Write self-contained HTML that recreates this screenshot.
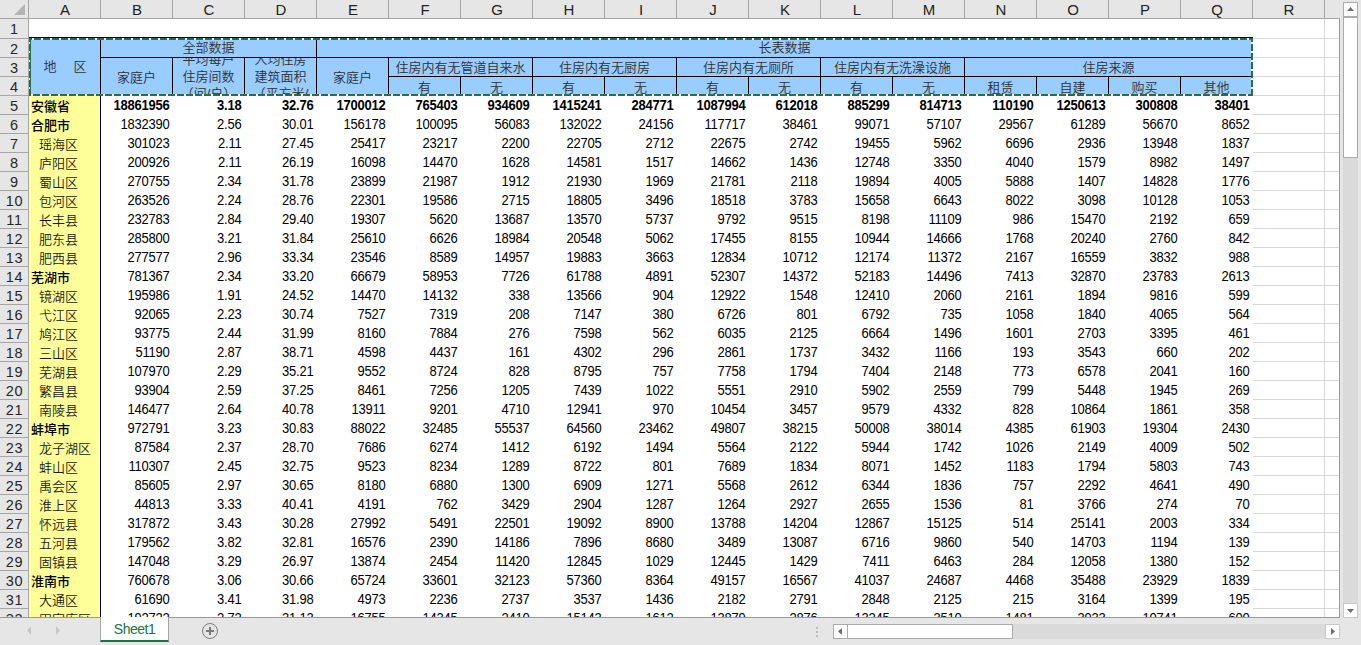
<!DOCTYPE html><html lang="zh-CN"><head><meta charset="utf-8"><title>Sheet1</title><style>
html,body{margin:0;padding:0}
body{width:1361px;height:645px;overflow:hidden;background:#e6e6e6;position:relative;font-family:"Liberation Sans","Noto Sans CJK SC",sans-serif}
#app{position:absolute;left:0;top:0;width:1361px;height:645px;overflow:hidden;background:#e6e6e6}
#app div{position:absolute;box-sizing:border-box}
.ch{top:0;height:18px;width:72px;text-align:center;font-size:14px;line-height:20px;color:#222;transform:scaleX(1.07)}
.rh{left:0;width:29px;height:18px;text-align:center;font-size:14.5px;line-height:21px;color:#262626;letter-spacing:0.8px;overflow:hidden}
.vl{width:1px;background:#a6a6a6}
.hl{height:1px;background:#a6a6a6}
.gv{width:1px;background:#d6d6d6}
.gh{height:1px;background:#d6d6d6}
.bv{width:1px;background:#000}
.bh{height:1px;background:#000}
.n{width:71px;height:18px;text-align:right;padding-right:2.5px;font-size:13px;line-height:18px;color:#000;letter-spacing:-0.22px;white-space:nowrap;transform:scaleY(1.075);transform-origin:0 4px}
.b{font-weight:bold}
.a{left:29px;width:71px;height:18px;font-family:"Liberation Sans","Noto Sans CJK SC",sans-serif;font-weight:350;font-size:13px;line-height:22px;color:#1a1a1a;white-space:nowrap;overflow:hidden}
.ab{font-family:"Liberation Sans","Noto Sans CJK SC",sans-serif;font-weight:500;color:#000;padding-left:2px}
.ai{padding-left:10px}
.h{font-family:"Liberation Sans","Noto Sans CJK SC",sans-serif;font-weight:350;font-size:13px;color:#303030;text-align:center;white-space:nowrap;overflow:hidden;line-height:18px}
</style></head><body><div id="app">
<div style="left:29px;top:19px;width:1310px;height:598px;background:#fff"></div>
<div class="gh" style="left:1253px;top:38px;width:86px"></div>
<div class="gh" style="left:1253px;top:57px;width:86px"></div>
<div class="gh" style="left:1253px;top:76px;width:86px"></div>
<div class="gh" style="left:1253px;top:95px;width:86px"></div>
<div class="gh" style="left:1253px;top:114px;width:86px"></div>
<div class="gh" style="left:1253px;top:133px;width:86px"></div>
<div class="gh" style="left:1253px;top:152px;width:86px"></div>
<div class="gh" style="left:1253px;top:171px;width:86px"></div>
<div class="gh" style="left:1253px;top:190px;width:86px"></div>
<div class="gh" style="left:1253px;top:209px;width:86px"></div>
<div class="gh" style="left:1253px;top:228px;width:86px"></div>
<div class="gh" style="left:1253px;top:247px;width:86px"></div>
<div class="gh" style="left:1253px;top:266px;width:86px"></div>
<div class="gh" style="left:1253px;top:285px;width:86px"></div>
<div class="gh" style="left:1253px;top:304px;width:86px"></div>
<div class="gh" style="left:1253px;top:323px;width:86px"></div>
<div class="gh" style="left:1253px;top:342px;width:86px"></div>
<div class="gh" style="left:1253px;top:361px;width:86px"></div>
<div class="gh" style="left:1253px;top:380px;width:86px"></div>
<div class="gh" style="left:1253px;top:399px;width:86px"></div>
<div class="gh" style="left:1253px;top:418px;width:86px"></div>
<div class="gh" style="left:1253px;top:437px;width:86px"></div>
<div class="gh" style="left:1253px;top:456px;width:86px"></div>
<div class="gh" style="left:1253px;top:475px;width:86px"></div>
<div class="gh" style="left:1253px;top:494px;width:86px"></div>
<div class="gh" style="left:1253px;top:513px;width:86px"></div>
<div class="gh" style="left:1253px;top:532px;width:86px"></div>
<div class="gh" style="left:1253px;top:551px;width:86px"></div>
<div class="gh" style="left:1253px;top:570px;width:86px"></div>
<div class="gh" style="left:1253px;top:589px;width:86px"></div>
<div class="gh" style="left:1253px;top:608px;width:86px"></div>
<div class="gv" style="left:1324px;top:19px;height:598px"></div>
<div style="left:29px;top:96px;width:71px;height:521px;background:#ffff99"></div>
<div style="left:29px;top:38px;width:1224px;height:58px;background:#99ccff"></div>
<div class="bh" style="left:29px;top:37px;width:1224px"></div>
<div class="bv" style="left:100px;top:38px;height:579px"></div>
<div class="bh" style="left:101px;top:57px;width:1151px"></div>
<div class="bh" style="left:389px;top:76px;width:863px"></div>
<div class="bv" style="left:316px;top:38px;height:58px"></div>
<div class="bv" style="left:172px;top:58px;height:38px"></div>
<div class="bv" style="left:244px;top:58px;height:38px"></div>
<div class="bv" style="left:388px;top:58px;height:38px"></div>
<div class="bv" style="left:532px;top:58px;height:38px"></div>
<div class="bv" style="left:676px;top:58px;height:38px"></div>
<div class="bv" style="left:820px;top:58px;height:38px"></div>
<div class="bv" style="left:964px;top:58px;height:38px"></div>
<div class="bv" style="left:460px;top:77px;height:19px"></div>
<div class="bv" style="left:604px;top:77px;height:19px"></div>
<div class="bv" style="left:748px;top:77px;height:19px"></div>
<div class="bv" style="left:892px;top:77px;height:19px"></div>
<div class="bv" style="left:1036px;top:77px;height:19px"></div>
<div class="bv" style="left:1108px;top:77px;height:19px"></div>
<div class="bv" style="left:1180px;top:77px;height:19px"></div>
<div class="h" style="left:29px;top:39px;width:71px;height:55px;line-height:55px;padding-left:1px">地<span style="display:inline-block;width:17px"></span>区</div>
<div class="h" style="left:101px;top:39px;width:215px;height:18px;line-height:18px;">全部数据</div>
<div class="h" style="left:317px;top:39px;width:935px;height:18px;line-height:18px;">长表数据</div>
<div class="h" style="left:101px;top:58px;width:71px;height:36px;line-height:40px;">家庭户</div>
<div class="h" style="left:317px;top:58px;width:71px;height:36px;line-height:40px;">家庭户</div>
<div class="h" style="left:173px;top:58px;width:71px;height:36px"><div style="left:0;top:-7px;width:71px;height:17px;line-height:17px">平均每户</div><div style="left:0;top:10px;width:71px;height:17px;line-height:17px">住房间数</div><div style="left:0;top:27px;width:71px;height:17px;line-height:17px">（间/户）</div></div>
<div class="h" style="left:245px;top:58px;width:71px;height:36px"><div style="left:0;top:-7px;width:71px;height:17px;line-height:17px">人均住房</div><div style="left:0;top:10px;width:71px;height:17px;line-height:17px">建筑面积</div><div style="left:0;top:27px;width:71px;height:17px;line-height:17px">（平方米/</div><div style="left:0;top:44px;width:71px;height:17px;line-height:17px">人）</div></div>
<div class="h" style="left:389px;top:58px;width:143px;height:18px;line-height:20px;">住房内有无管道自来水</div>
<div class="h" style="left:533px;top:58px;width:143px;height:18px;line-height:20px;">住房内有无厨房</div>
<div class="h" style="left:677px;top:58px;width:143px;height:18px;line-height:20px;">住房内有无厕所</div>
<div class="h" style="left:821px;top:58px;width:143px;height:18px;line-height:20px;">住房内有无洗澡设施</div>
<div class="h" style="left:965px;top:58px;width:287px;height:18px;line-height:20px;">住房来源</div>
<div class="h" style="left:389px;top:77px;width:71px;height:17px;line-height:21px;">有</div>
<div class="h" style="left:461px;top:77px;width:71px;height:17px;line-height:21px;">无</div>
<div class="h" style="left:533px;top:77px;width:71px;height:17px;line-height:21px;">有</div>
<div class="h" style="left:605px;top:77px;width:71px;height:17px;line-height:21px;">无</div>
<div class="h" style="left:677px;top:77px;width:71px;height:17px;line-height:21px;">有</div>
<div class="h" style="left:749px;top:77px;width:71px;height:17px;line-height:21px;">无</div>
<div class="h" style="left:821px;top:77px;width:71px;height:17px;line-height:21px;">有</div>
<div class="h" style="left:893px;top:77px;width:71px;height:17px;line-height:21px;">无</div>
<div class="h" style="left:965px;top:77px;width:71px;height:17px;line-height:21px;">租赁</div>
<div class="h" style="left:1037px;top:77px;width:71px;height:17px;line-height:21px;">自建</div>
<div class="h" style="left:1109px;top:77px;width:71px;height:17px;line-height:21px;">购买</div>
<div class="h" style="left:1181px;top:77px;width:71px;height:17px;line-height:21px;">其他</div>
<div class="a ab" style="top:96px">安徽省</div>
<div class="n b" style="left:101px;top:96px">18861956</div>
<div class="n b" style="left:173px;top:96px">3.18</div>
<div class="n b" style="left:245px;top:96px">32.76</div>
<div class="n b" style="left:317px;top:96px">1700012</div>
<div class="n b" style="left:389px;top:96px">765403</div>
<div class="n b" style="left:461px;top:96px">934609</div>
<div class="n b" style="left:533px;top:96px">1415241</div>
<div class="n b" style="left:605px;top:96px">284771</div>
<div class="n b" style="left:677px;top:96px">1087994</div>
<div class="n b" style="left:749px;top:96px">612018</div>
<div class="n b" style="left:821px;top:96px">885299</div>
<div class="n b" style="left:893px;top:96px">814713</div>
<div class="n b" style="left:965px;top:96px">110190</div>
<div class="n b" style="left:1037px;top:96px">1250613</div>
<div class="n b" style="left:1109px;top:96px">300808</div>
<div class="n b" style="left:1181px;top:96px">38401</div>
<div class="a ab" style="top:115px">合肥市</div>
<div class="n" style="left:101px;top:115px">1832390</div>
<div class="n" style="left:173px;top:115px">2.56</div>
<div class="n" style="left:245px;top:115px">30.01</div>
<div class="n" style="left:317px;top:115px">156178</div>
<div class="n" style="left:389px;top:115px">100095</div>
<div class="n" style="left:461px;top:115px">56083</div>
<div class="n" style="left:533px;top:115px">132022</div>
<div class="n" style="left:605px;top:115px">24156</div>
<div class="n" style="left:677px;top:115px">117717</div>
<div class="n" style="left:749px;top:115px">38461</div>
<div class="n" style="left:821px;top:115px">99071</div>
<div class="n" style="left:893px;top:115px">57107</div>
<div class="n" style="left:965px;top:115px">29567</div>
<div class="n" style="left:1037px;top:115px">61289</div>
<div class="n" style="left:1109px;top:115px">56670</div>
<div class="n" style="left:1181px;top:115px">8652</div>
<div class="a ai" style="top:134px">瑶海区</div>
<div class="n" style="left:101px;top:134px">301023</div>
<div class="n" style="left:173px;top:134px">2.11</div>
<div class="n" style="left:245px;top:134px">27.45</div>
<div class="n" style="left:317px;top:134px">25417</div>
<div class="n" style="left:389px;top:134px">23217</div>
<div class="n" style="left:461px;top:134px">2200</div>
<div class="n" style="left:533px;top:134px">22705</div>
<div class="n" style="left:605px;top:134px">2712</div>
<div class="n" style="left:677px;top:134px">22675</div>
<div class="n" style="left:749px;top:134px">2742</div>
<div class="n" style="left:821px;top:134px">19455</div>
<div class="n" style="left:893px;top:134px">5962</div>
<div class="n" style="left:965px;top:134px">6696</div>
<div class="n" style="left:1037px;top:134px">2936</div>
<div class="n" style="left:1109px;top:134px">13948</div>
<div class="n" style="left:1181px;top:134px">1837</div>
<div class="a ai" style="top:153px">庐阳区</div>
<div class="n" style="left:101px;top:153px">200926</div>
<div class="n" style="left:173px;top:153px">2.11</div>
<div class="n" style="left:245px;top:153px">26.19</div>
<div class="n" style="left:317px;top:153px">16098</div>
<div class="n" style="left:389px;top:153px">14470</div>
<div class="n" style="left:461px;top:153px">1628</div>
<div class="n" style="left:533px;top:153px">14581</div>
<div class="n" style="left:605px;top:153px">1517</div>
<div class="n" style="left:677px;top:153px">14662</div>
<div class="n" style="left:749px;top:153px">1436</div>
<div class="n" style="left:821px;top:153px">12748</div>
<div class="n" style="left:893px;top:153px">3350</div>
<div class="n" style="left:965px;top:153px">4040</div>
<div class="n" style="left:1037px;top:153px">1579</div>
<div class="n" style="left:1109px;top:153px">8982</div>
<div class="n" style="left:1181px;top:153px">1497</div>
<div class="a ai" style="top:172px">蜀山区</div>
<div class="n" style="left:101px;top:172px">270755</div>
<div class="n" style="left:173px;top:172px">2.34</div>
<div class="n" style="left:245px;top:172px">31.78</div>
<div class="n" style="left:317px;top:172px">23899</div>
<div class="n" style="left:389px;top:172px">21987</div>
<div class="n" style="left:461px;top:172px">1912</div>
<div class="n" style="left:533px;top:172px">21930</div>
<div class="n" style="left:605px;top:172px">1969</div>
<div class="n" style="left:677px;top:172px">21781</div>
<div class="n" style="left:749px;top:172px">2118</div>
<div class="n" style="left:821px;top:172px">19894</div>
<div class="n" style="left:893px;top:172px">4005</div>
<div class="n" style="left:965px;top:172px">5888</div>
<div class="n" style="left:1037px;top:172px">1407</div>
<div class="n" style="left:1109px;top:172px">14828</div>
<div class="n" style="left:1181px;top:172px">1776</div>
<div class="a ai" style="top:191px">包河区</div>
<div class="n" style="left:101px;top:191px">263526</div>
<div class="n" style="left:173px;top:191px">2.24</div>
<div class="n" style="left:245px;top:191px">28.76</div>
<div class="n" style="left:317px;top:191px">22301</div>
<div class="n" style="left:389px;top:191px">19586</div>
<div class="n" style="left:461px;top:191px">2715</div>
<div class="n" style="left:533px;top:191px">18805</div>
<div class="n" style="left:605px;top:191px">3496</div>
<div class="n" style="left:677px;top:191px">18518</div>
<div class="n" style="left:749px;top:191px">3783</div>
<div class="n" style="left:821px;top:191px">15658</div>
<div class="n" style="left:893px;top:191px">6643</div>
<div class="n" style="left:965px;top:191px">8022</div>
<div class="n" style="left:1037px;top:191px">3098</div>
<div class="n" style="left:1109px;top:191px">10128</div>
<div class="n" style="left:1181px;top:191px">1053</div>
<div class="a ai" style="top:210px">长丰县</div>
<div class="n" style="left:101px;top:210px">232783</div>
<div class="n" style="left:173px;top:210px">2.84</div>
<div class="n" style="left:245px;top:210px">29.40</div>
<div class="n" style="left:317px;top:210px">19307</div>
<div class="n" style="left:389px;top:210px">5620</div>
<div class="n" style="left:461px;top:210px">13687</div>
<div class="n" style="left:533px;top:210px">13570</div>
<div class="n" style="left:605px;top:210px">5737</div>
<div class="n" style="left:677px;top:210px">9792</div>
<div class="n" style="left:749px;top:210px">9515</div>
<div class="n" style="left:821px;top:210px">8198</div>
<div class="n" style="left:893px;top:210px">11109</div>
<div class="n" style="left:965px;top:210px">986</div>
<div class="n" style="left:1037px;top:210px">15470</div>
<div class="n" style="left:1109px;top:210px">2192</div>
<div class="n" style="left:1181px;top:210px">659</div>
<div class="a ai" style="top:229px">肥东县</div>
<div class="n" style="left:101px;top:229px">285800</div>
<div class="n" style="left:173px;top:229px">3.21</div>
<div class="n" style="left:245px;top:229px">31.84</div>
<div class="n" style="left:317px;top:229px">25610</div>
<div class="n" style="left:389px;top:229px">6626</div>
<div class="n" style="left:461px;top:229px">18984</div>
<div class="n" style="left:533px;top:229px">20548</div>
<div class="n" style="left:605px;top:229px">5062</div>
<div class="n" style="left:677px;top:229px">17455</div>
<div class="n" style="left:749px;top:229px">8155</div>
<div class="n" style="left:821px;top:229px">10944</div>
<div class="n" style="left:893px;top:229px">14666</div>
<div class="n" style="left:965px;top:229px">1768</div>
<div class="n" style="left:1037px;top:229px">20240</div>
<div class="n" style="left:1109px;top:229px">2760</div>
<div class="n" style="left:1181px;top:229px">842</div>
<div class="a ai" style="top:248px">肥西县</div>
<div class="n" style="left:101px;top:248px">277577</div>
<div class="n" style="left:173px;top:248px">2.96</div>
<div class="n" style="left:245px;top:248px">33.34</div>
<div class="n" style="left:317px;top:248px">23546</div>
<div class="n" style="left:389px;top:248px">8589</div>
<div class="n" style="left:461px;top:248px">14957</div>
<div class="n" style="left:533px;top:248px">19883</div>
<div class="n" style="left:605px;top:248px">3663</div>
<div class="n" style="left:677px;top:248px">12834</div>
<div class="n" style="left:749px;top:248px">10712</div>
<div class="n" style="left:821px;top:248px">12174</div>
<div class="n" style="left:893px;top:248px">11372</div>
<div class="n" style="left:965px;top:248px">2167</div>
<div class="n" style="left:1037px;top:248px">16559</div>
<div class="n" style="left:1109px;top:248px">3832</div>
<div class="n" style="left:1181px;top:248px">988</div>
<div class="a ab" style="top:267px">芜湖市</div>
<div class="n" style="left:101px;top:267px">781367</div>
<div class="n" style="left:173px;top:267px">2.34</div>
<div class="n" style="left:245px;top:267px">33.20</div>
<div class="n" style="left:317px;top:267px">66679</div>
<div class="n" style="left:389px;top:267px">58953</div>
<div class="n" style="left:461px;top:267px">7726</div>
<div class="n" style="left:533px;top:267px">61788</div>
<div class="n" style="left:605px;top:267px">4891</div>
<div class="n" style="left:677px;top:267px">52307</div>
<div class="n" style="left:749px;top:267px">14372</div>
<div class="n" style="left:821px;top:267px">52183</div>
<div class="n" style="left:893px;top:267px">14496</div>
<div class="n" style="left:965px;top:267px">7413</div>
<div class="n" style="left:1037px;top:267px">32870</div>
<div class="n" style="left:1109px;top:267px">23783</div>
<div class="n" style="left:1181px;top:267px">2613</div>
<div class="a ai" style="top:286px">镜湖区</div>
<div class="n" style="left:101px;top:286px">195986</div>
<div class="n" style="left:173px;top:286px">1.91</div>
<div class="n" style="left:245px;top:286px">24.52</div>
<div class="n" style="left:317px;top:286px">14470</div>
<div class="n" style="left:389px;top:286px">14132</div>
<div class="n" style="left:461px;top:286px">338</div>
<div class="n" style="left:533px;top:286px">13566</div>
<div class="n" style="left:605px;top:286px">904</div>
<div class="n" style="left:677px;top:286px">12922</div>
<div class="n" style="left:749px;top:286px">1548</div>
<div class="n" style="left:821px;top:286px">12410</div>
<div class="n" style="left:893px;top:286px">2060</div>
<div class="n" style="left:965px;top:286px">2161</div>
<div class="n" style="left:1037px;top:286px">1894</div>
<div class="n" style="left:1109px;top:286px">9816</div>
<div class="n" style="left:1181px;top:286px">599</div>
<div class="a ai" style="top:305px">弋江区</div>
<div class="n" style="left:101px;top:305px">92065</div>
<div class="n" style="left:173px;top:305px">2.23</div>
<div class="n" style="left:245px;top:305px">30.74</div>
<div class="n" style="left:317px;top:305px">7527</div>
<div class="n" style="left:389px;top:305px">7319</div>
<div class="n" style="left:461px;top:305px">208</div>
<div class="n" style="left:533px;top:305px">7147</div>
<div class="n" style="left:605px;top:305px">380</div>
<div class="n" style="left:677px;top:305px">6726</div>
<div class="n" style="left:749px;top:305px">801</div>
<div class="n" style="left:821px;top:305px">6792</div>
<div class="n" style="left:893px;top:305px">735</div>
<div class="n" style="left:965px;top:305px">1058</div>
<div class="n" style="left:1037px;top:305px">1840</div>
<div class="n" style="left:1109px;top:305px">4065</div>
<div class="n" style="left:1181px;top:305px">564</div>
<div class="a ai" style="top:324px">鸠江区</div>
<div class="n" style="left:101px;top:324px">93775</div>
<div class="n" style="left:173px;top:324px">2.44</div>
<div class="n" style="left:245px;top:324px">31.99</div>
<div class="n" style="left:317px;top:324px">8160</div>
<div class="n" style="left:389px;top:324px">7884</div>
<div class="n" style="left:461px;top:324px">276</div>
<div class="n" style="left:533px;top:324px">7598</div>
<div class="n" style="left:605px;top:324px">562</div>
<div class="n" style="left:677px;top:324px">6035</div>
<div class="n" style="left:749px;top:324px">2125</div>
<div class="n" style="left:821px;top:324px">6664</div>
<div class="n" style="left:893px;top:324px">1496</div>
<div class="n" style="left:965px;top:324px">1601</div>
<div class="n" style="left:1037px;top:324px">2703</div>
<div class="n" style="left:1109px;top:324px">3395</div>
<div class="n" style="left:1181px;top:324px">461</div>
<div class="a ai" style="top:343px">三山区</div>
<div class="n" style="left:101px;top:343px">51190</div>
<div class="n" style="left:173px;top:343px">2.87</div>
<div class="n" style="left:245px;top:343px">38.71</div>
<div class="n" style="left:317px;top:343px">4598</div>
<div class="n" style="left:389px;top:343px">4437</div>
<div class="n" style="left:461px;top:343px">161</div>
<div class="n" style="left:533px;top:343px">4302</div>
<div class="n" style="left:605px;top:343px">296</div>
<div class="n" style="left:677px;top:343px">2861</div>
<div class="n" style="left:749px;top:343px">1737</div>
<div class="n" style="left:821px;top:343px">3432</div>
<div class="n" style="left:893px;top:343px">1166</div>
<div class="n" style="left:965px;top:343px">193</div>
<div class="n" style="left:1037px;top:343px">3543</div>
<div class="n" style="left:1109px;top:343px">660</div>
<div class="n" style="left:1181px;top:343px">202</div>
<div class="a ai" style="top:362px">芜湖县</div>
<div class="n" style="left:101px;top:362px">107970</div>
<div class="n" style="left:173px;top:362px">2.29</div>
<div class="n" style="left:245px;top:362px">35.21</div>
<div class="n" style="left:317px;top:362px">9552</div>
<div class="n" style="left:389px;top:362px">8724</div>
<div class="n" style="left:461px;top:362px">828</div>
<div class="n" style="left:533px;top:362px">8795</div>
<div class="n" style="left:605px;top:362px">757</div>
<div class="n" style="left:677px;top:362px">7758</div>
<div class="n" style="left:749px;top:362px">1794</div>
<div class="n" style="left:821px;top:362px">7404</div>
<div class="n" style="left:893px;top:362px">2148</div>
<div class="n" style="left:965px;top:362px">773</div>
<div class="n" style="left:1037px;top:362px">6578</div>
<div class="n" style="left:1109px;top:362px">2041</div>
<div class="n" style="left:1181px;top:362px">160</div>
<div class="a ai" style="top:381px">繁昌县</div>
<div class="n" style="left:101px;top:381px">93904</div>
<div class="n" style="left:173px;top:381px">2.59</div>
<div class="n" style="left:245px;top:381px">37.25</div>
<div class="n" style="left:317px;top:381px">8461</div>
<div class="n" style="left:389px;top:381px">7256</div>
<div class="n" style="left:461px;top:381px">1205</div>
<div class="n" style="left:533px;top:381px">7439</div>
<div class="n" style="left:605px;top:381px">1022</div>
<div class="n" style="left:677px;top:381px">5551</div>
<div class="n" style="left:749px;top:381px">2910</div>
<div class="n" style="left:821px;top:381px">5902</div>
<div class="n" style="left:893px;top:381px">2559</div>
<div class="n" style="left:965px;top:381px">799</div>
<div class="n" style="left:1037px;top:381px">5448</div>
<div class="n" style="left:1109px;top:381px">1945</div>
<div class="n" style="left:1181px;top:381px">269</div>
<div class="a ai" style="top:400px">南陵县</div>
<div class="n" style="left:101px;top:400px">146477</div>
<div class="n" style="left:173px;top:400px">2.64</div>
<div class="n" style="left:245px;top:400px">40.78</div>
<div class="n" style="left:317px;top:400px">13911</div>
<div class="n" style="left:389px;top:400px">9201</div>
<div class="n" style="left:461px;top:400px">4710</div>
<div class="n" style="left:533px;top:400px">12941</div>
<div class="n" style="left:605px;top:400px">970</div>
<div class="n" style="left:677px;top:400px">10454</div>
<div class="n" style="left:749px;top:400px">3457</div>
<div class="n" style="left:821px;top:400px">9579</div>
<div class="n" style="left:893px;top:400px">4332</div>
<div class="n" style="left:965px;top:400px">828</div>
<div class="n" style="left:1037px;top:400px">10864</div>
<div class="n" style="left:1109px;top:400px">1861</div>
<div class="n" style="left:1181px;top:400px">358</div>
<div class="a ab" style="top:419px">蚌埠市</div>
<div class="n" style="left:101px;top:419px">972791</div>
<div class="n" style="left:173px;top:419px">3.23</div>
<div class="n" style="left:245px;top:419px">30.83</div>
<div class="n" style="left:317px;top:419px">88022</div>
<div class="n" style="left:389px;top:419px">32485</div>
<div class="n" style="left:461px;top:419px">55537</div>
<div class="n" style="left:533px;top:419px">64560</div>
<div class="n" style="left:605px;top:419px">23462</div>
<div class="n" style="left:677px;top:419px">49807</div>
<div class="n" style="left:749px;top:419px">38215</div>
<div class="n" style="left:821px;top:419px">50008</div>
<div class="n" style="left:893px;top:419px">38014</div>
<div class="n" style="left:965px;top:419px">4385</div>
<div class="n" style="left:1037px;top:419px">61903</div>
<div class="n" style="left:1109px;top:419px">19304</div>
<div class="n" style="left:1181px;top:419px">2430</div>
<div class="a ai" style="top:438px">龙子湖区</div>
<div class="n" style="left:101px;top:438px">87584</div>
<div class="n" style="left:173px;top:438px">2.37</div>
<div class="n" style="left:245px;top:438px">28.70</div>
<div class="n" style="left:317px;top:438px">7686</div>
<div class="n" style="left:389px;top:438px">6274</div>
<div class="n" style="left:461px;top:438px">1412</div>
<div class="n" style="left:533px;top:438px">6192</div>
<div class="n" style="left:605px;top:438px">1494</div>
<div class="n" style="left:677px;top:438px">5564</div>
<div class="n" style="left:749px;top:438px">2122</div>
<div class="n" style="left:821px;top:438px">5944</div>
<div class="n" style="left:893px;top:438px">1742</div>
<div class="n" style="left:965px;top:438px">1026</div>
<div class="n" style="left:1037px;top:438px">2149</div>
<div class="n" style="left:1109px;top:438px">4009</div>
<div class="n" style="left:1181px;top:438px">502</div>
<div class="a ai" style="top:457px">蚌山区</div>
<div class="n" style="left:101px;top:457px">110307</div>
<div class="n" style="left:173px;top:457px">2.45</div>
<div class="n" style="left:245px;top:457px">32.75</div>
<div class="n" style="left:317px;top:457px">9523</div>
<div class="n" style="left:389px;top:457px">8234</div>
<div class="n" style="left:461px;top:457px">1289</div>
<div class="n" style="left:533px;top:457px">8722</div>
<div class="n" style="left:605px;top:457px">801</div>
<div class="n" style="left:677px;top:457px">7689</div>
<div class="n" style="left:749px;top:457px">1834</div>
<div class="n" style="left:821px;top:457px">8071</div>
<div class="n" style="left:893px;top:457px">1452</div>
<div class="n" style="left:965px;top:457px">1183</div>
<div class="n" style="left:1037px;top:457px">1794</div>
<div class="n" style="left:1109px;top:457px">5803</div>
<div class="n" style="left:1181px;top:457px">743</div>
<div class="a ai" style="top:476px">禹会区</div>
<div class="n" style="left:101px;top:476px">85605</div>
<div class="n" style="left:173px;top:476px">2.97</div>
<div class="n" style="left:245px;top:476px">30.65</div>
<div class="n" style="left:317px;top:476px">8180</div>
<div class="n" style="left:389px;top:476px">6880</div>
<div class="n" style="left:461px;top:476px">1300</div>
<div class="n" style="left:533px;top:476px">6909</div>
<div class="n" style="left:605px;top:476px">1271</div>
<div class="n" style="left:677px;top:476px">5568</div>
<div class="n" style="left:749px;top:476px">2612</div>
<div class="n" style="left:821px;top:476px">6344</div>
<div class="n" style="left:893px;top:476px">1836</div>
<div class="n" style="left:965px;top:476px">757</div>
<div class="n" style="left:1037px;top:476px">2292</div>
<div class="n" style="left:1109px;top:476px">4641</div>
<div class="n" style="left:1181px;top:476px">490</div>
<div class="a ai" style="top:495px">淮上区</div>
<div class="n" style="left:101px;top:495px">44813</div>
<div class="n" style="left:173px;top:495px">3.33</div>
<div class="n" style="left:245px;top:495px">40.41</div>
<div class="n" style="left:317px;top:495px">4191</div>
<div class="n" style="left:389px;top:495px">762</div>
<div class="n" style="left:461px;top:495px">3429</div>
<div class="n" style="left:533px;top:495px">2904</div>
<div class="n" style="left:605px;top:495px">1287</div>
<div class="n" style="left:677px;top:495px">1264</div>
<div class="n" style="left:749px;top:495px">2927</div>
<div class="n" style="left:821px;top:495px">2655</div>
<div class="n" style="left:893px;top:495px">1536</div>
<div class="n" style="left:965px;top:495px">81</div>
<div class="n" style="left:1037px;top:495px">3766</div>
<div class="n" style="left:1109px;top:495px">274</div>
<div class="n" style="left:1181px;top:495px">70</div>
<div class="a ai" style="top:514px">怀远县</div>
<div class="n" style="left:101px;top:514px">317872</div>
<div class="n" style="left:173px;top:514px">3.43</div>
<div class="n" style="left:245px;top:514px">30.28</div>
<div class="n" style="left:317px;top:514px">27992</div>
<div class="n" style="left:389px;top:514px">5491</div>
<div class="n" style="left:461px;top:514px">22501</div>
<div class="n" style="left:533px;top:514px">19092</div>
<div class="n" style="left:605px;top:514px">8900</div>
<div class="n" style="left:677px;top:514px">13788</div>
<div class="n" style="left:749px;top:514px">14204</div>
<div class="n" style="left:821px;top:514px">12867</div>
<div class="n" style="left:893px;top:514px">15125</div>
<div class="n" style="left:965px;top:514px">514</div>
<div class="n" style="left:1037px;top:514px">25141</div>
<div class="n" style="left:1109px;top:514px">2003</div>
<div class="n" style="left:1181px;top:514px">334</div>
<div class="a ai" style="top:533px">五河县</div>
<div class="n" style="left:101px;top:533px">179562</div>
<div class="n" style="left:173px;top:533px">3.82</div>
<div class="n" style="left:245px;top:533px">32.81</div>
<div class="n" style="left:317px;top:533px">16576</div>
<div class="n" style="left:389px;top:533px">2390</div>
<div class="n" style="left:461px;top:533px">14186</div>
<div class="n" style="left:533px;top:533px">7896</div>
<div class="n" style="left:605px;top:533px">8680</div>
<div class="n" style="left:677px;top:533px">3489</div>
<div class="n" style="left:749px;top:533px">13087</div>
<div class="n" style="left:821px;top:533px">6716</div>
<div class="n" style="left:893px;top:533px">9860</div>
<div class="n" style="left:965px;top:533px">540</div>
<div class="n" style="left:1037px;top:533px">14703</div>
<div class="n" style="left:1109px;top:533px">1194</div>
<div class="n" style="left:1181px;top:533px">139</div>
<div class="a ai" style="top:552px">固镇县</div>
<div class="n" style="left:101px;top:552px">147048</div>
<div class="n" style="left:173px;top:552px">3.29</div>
<div class="n" style="left:245px;top:552px">26.97</div>
<div class="n" style="left:317px;top:552px">13874</div>
<div class="n" style="left:389px;top:552px">2454</div>
<div class="n" style="left:461px;top:552px">11420</div>
<div class="n" style="left:533px;top:552px">12845</div>
<div class="n" style="left:605px;top:552px">1029</div>
<div class="n" style="left:677px;top:552px">12445</div>
<div class="n" style="left:749px;top:552px">1429</div>
<div class="n" style="left:821px;top:552px">7411</div>
<div class="n" style="left:893px;top:552px">6463</div>
<div class="n" style="left:965px;top:552px">284</div>
<div class="n" style="left:1037px;top:552px">12058</div>
<div class="n" style="left:1109px;top:552px">1380</div>
<div class="n" style="left:1181px;top:552px">152</div>
<div class="a ab" style="top:571px">淮南市</div>
<div class="n" style="left:101px;top:571px">760678</div>
<div class="n" style="left:173px;top:571px">3.06</div>
<div class="n" style="left:245px;top:571px">30.66</div>
<div class="n" style="left:317px;top:571px">65724</div>
<div class="n" style="left:389px;top:571px">33601</div>
<div class="n" style="left:461px;top:571px">32123</div>
<div class="n" style="left:533px;top:571px">57360</div>
<div class="n" style="left:605px;top:571px">8364</div>
<div class="n" style="left:677px;top:571px">49157</div>
<div class="n" style="left:749px;top:571px">16567</div>
<div class="n" style="left:821px;top:571px">41037</div>
<div class="n" style="left:893px;top:571px">24687</div>
<div class="n" style="left:965px;top:571px">4468</div>
<div class="n" style="left:1037px;top:571px">35488</div>
<div class="n" style="left:1109px;top:571px">23929</div>
<div class="n" style="left:1181px;top:571px">1839</div>
<div class="a ai" style="top:590px">大通区</div>
<div class="n" style="left:101px;top:590px">61690</div>
<div class="n" style="left:173px;top:590px">3.41</div>
<div class="n" style="left:245px;top:590px">31.98</div>
<div class="n" style="left:317px;top:590px">4973</div>
<div class="n" style="left:389px;top:590px">2236</div>
<div class="n" style="left:461px;top:590px">2737</div>
<div class="n" style="left:533px;top:590px">3537</div>
<div class="n" style="left:605px;top:590px">1436</div>
<div class="n" style="left:677px;top:590px">2182</div>
<div class="n" style="left:749px;top:590px">2791</div>
<div class="n" style="left:821px;top:590px">2848</div>
<div class="n" style="left:893px;top:590px">2125</div>
<div class="n" style="left:965px;top:590px">215</div>
<div class="n" style="left:1037px;top:590px">3164</div>
<div class="n" style="left:1109px;top:590px">1399</div>
<div class="n" style="left:1181px;top:590px">195</div>
<div class="a ai" style="top:609px">田家庵区</div>
<div class="n" style="left:101px;top:609px">192722</div>
<div class="n" style="left:173px;top:609px">2.72</div>
<div class="n" style="left:245px;top:609px">31.13</div>
<div class="n" style="left:317px;top:609px">16755</div>
<div class="n" style="left:389px;top:609px">14345</div>
<div class="n" style="left:461px;top:609px">2410</div>
<div class="n" style="left:533px;top:609px">15143</div>
<div class="n" style="left:605px;top:609px">1612</div>
<div class="n" style="left:677px;top:609px">13879</div>
<div class="n" style="left:749px;top:609px">2876</div>
<div class="n" style="left:821px;top:609px">13245</div>
<div class="n" style="left:893px;top:609px">3510</div>
<div class="n" style="left:965px;top:609px">1481</div>
<div class="n" style="left:1037px;top:609px">3933</div>
<div class="n" style="left:1109px;top:609px">10741</div>
<div class="n" style="left:1181px;top:609px">600</div>
<div style="left:29px;top:38px;width:1224px;height:2px;background:repeating-linear-gradient(90deg,#217346 0,#217346 3px,#fff 3px,#fff 5px,#217346 5px,#217346 9px)"></div>
<div style="left:29px;top:94px;width:1224px;height:2px;background:repeating-linear-gradient(90deg,#217346 0,#217346 2px,#fff 2px,#fff 4px,#217346 4px,#217346 9px)"></div>
<div style="left:29px;top:38px;width:1px;height:58px;background:repeating-linear-gradient(180deg,#217346 0,#217346 4px,#fff 4px,#fff 6px,#217346 6px,#217346 9px)"></div>
<div style="left:30px;top:38px;width:1px;height:58px;background:#217346"></div>
<div style="left:1251px;top:38px;width:2px;height:58px;background:repeating-linear-gradient(180deg,#217346 0,#217346 4px,#fff 4px,#fff 6px,#217346 6px,#217346 9px)"></div>
<div style="left:0;top:0;width:1361px;height:18px;background:#e6e6e6"></div>
<div class="ch" style="left:29px">A</div>
<div class="ch" style="left:101px">B</div>
<div class="ch" style="left:173px">C</div>
<div class="ch" style="left:245px">D</div>
<div class="ch" style="left:317px">E</div>
<div class="ch" style="left:389px">F</div>
<div class="ch" style="left:461px">G</div>
<div class="ch" style="left:533px">H</div>
<div class="ch" style="left:605px">I</div>
<div class="ch" style="left:677px">J</div>
<div class="ch" style="left:749px">K</div>
<div class="ch" style="left:821px">L</div>
<div class="ch" style="left:893px">M</div>
<div class="ch" style="left:965px">N</div>
<div class="ch" style="left:1037px">O</div>
<div class="ch" style="left:1109px">P</div>
<div class="ch" style="left:1181px">Q</div>
<div class="ch" style="left:1253px">R</div>
<div class="vl" style="left:28px;top:0;height:18px"></div>
<div class="vl" style="left:100px;top:0;height:18px"></div>
<div class="vl" style="left:172px;top:0;height:18px"></div>
<div class="vl" style="left:244px;top:0;height:18px"></div>
<div class="vl" style="left:316px;top:0;height:18px"></div>
<div class="vl" style="left:388px;top:0;height:18px"></div>
<div class="vl" style="left:460px;top:0;height:18px"></div>
<div class="vl" style="left:532px;top:0;height:18px"></div>
<div class="vl" style="left:604px;top:0;height:18px"></div>
<div class="vl" style="left:676px;top:0;height:18px"></div>
<div class="vl" style="left:748px;top:0;height:18px"></div>
<div class="vl" style="left:820px;top:0;height:18px"></div>
<div class="vl" style="left:892px;top:0;height:18px"></div>
<div class="vl" style="left:964px;top:0;height:18px"></div>
<div class="vl" style="left:1036px;top:0;height:18px"></div>
<div class="vl" style="left:1108px;top:0;height:18px"></div>
<div class="vl" style="left:1180px;top:0;height:18px"></div>
<div class="vl" style="left:1252px;top:0;height:18px"></div>
<div class="vl" style="left:1324px;top:0;height:18px"></div>
<div class="hl" style="left:0;top:18px;width:1340px"></div>
<div style="left:14px;top:4px;width:11px;height:11px;background:#b4b4b4;clip-path:polygon(100% 0,100% 100%,0 100%)"></div>
<div style="left:0;top:19px;width:28px;height:598px;background:#e6e6e6"></div>
<div class="rh" style="top:19px">1</div>
<div class="hl" style="left:0;top:38px;width:28px"></div>
<div class="rh" style="top:39px">2</div>
<div class="hl" style="left:0;top:57px;width:28px"></div>
<div class="rh" style="top:58px">3</div>
<div class="hl" style="left:0;top:76px;width:28px"></div>
<div class="rh" style="top:77px">4</div>
<div class="hl" style="left:0;top:95px;width:28px"></div>
<div class="rh" style="top:96px">5</div>
<div class="hl" style="left:0;top:114px;width:28px"></div>
<div class="rh" style="top:115px">6</div>
<div class="hl" style="left:0;top:133px;width:28px"></div>
<div class="rh" style="top:134px">7</div>
<div class="hl" style="left:0;top:152px;width:28px"></div>
<div class="rh" style="top:153px">8</div>
<div class="hl" style="left:0;top:171px;width:28px"></div>
<div class="rh" style="top:172px">9</div>
<div class="hl" style="left:0;top:190px;width:28px"></div>
<div class="rh" style="top:191px">10</div>
<div class="hl" style="left:0;top:209px;width:28px"></div>
<div class="rh" style="top:210px">11</div>
<div class="hl" style="left:0;top:228px;width:28px"></div>
<div class="rh" style="top:229px">12</div>
<div class="hl" style="left:0;top:247px;width:28px"></div>
<div class="rh" style="top:248px">13</div>
<div class="hl" style="left:0;top:266px;width:28px"></div>
<div class="rh" style="top:267px">14</div>
<div class="hl" style="left:0;top:285px;width:28px"></div>
<div class="rh" style="top:286px">15</div>
<div class="hl" style="left:0;top:304px;width:28px"></div>
<div class="rh" style="top:305px">16</div>
<div class="hl" style="left:0;top:323px;width:28px"></div>
<div class="rh" style="top:324px">17</div>
<div class="hl" style="left:0;top:342px;width:28px"></div>
<div class="rh" style="top:343px">18</div>
<div class="hl" style="left:0;top:361px;width:28px"></div>
<div class="rh" style="top:362px">19</div>
<div class="hl" style="left:0;top:380px;width:28px"></div>
<div class="rh" style="top:381px">20</div>
<div class="hl" style="left:0;top:399px;width:28px"></div>
<div class="rh" style="top:400px">21</div>
<div class="hl" style="left:0;top:418px;width:28px"></div>
<div class="rh" style="top:419px">22</div>
<div class="hl" style="left:0;top:437px;width:28px"></div>
<div class="rh" style="top:438px">23</div>
<div class="hl" style="left:0;top:456px;width:28px"></div>
<div class="rh" style="top:457px">24</div>
<div class="hl" style="left:0;top:475px;width:28px"></div>
<div class="rh" style="top:476px">25</div>
<div class="hl" style="left:0;top:494px;width:28px"></div>
<div class="rh" style="top:495px">26</div>
<div class="hl" style="left:0;top:513px;width:28px"></div>
<div class="rh" style="top:514px">27</div>
<div class="hl" style="left:0;top:532px;width:28px"></div>
<div class="rh" style="top:533px">28</div>
<div class="hl" style="left:0;top:551px;width:28px"></div>
<div class="rh" style="top:552px">29</div>
<div class="hl" style="left:0;top:570px;width:28px"></div>
<div class="rh" style="top:571px">30</div>
<div class="hl" style="left:0;top:589px;width:28px"></div>
<div class="rh" style="top:590px">31</div>
<div class="hl" style="left:0;top:608px;width:28px"></div>
<div class="rh" style="top:609px">32</div>
<div class="vl" style="left:28px;top:0;height:617px"></div>
<div class="vl" style="left:1339px;top:18px;height:600px;background:#9a9a9a"></div>
<div style="left:0;top:617px;width:1361px;height:28px;background:#e6e6e6"></div>
<div class="hl" style="left:0;top:617px;width:1340px;background:#9a9a9a"></div>
<div style="left:1340px;top:0;width:21px;height:645px;background:#e6e6e6"></div>
<div style="left:1343px;top:17px;width:15px;height:587px;background:#dadada"></div>
<div style="left:1343px;top:2px;width:15px;height:15px;background:#fff;border:1px solid #ababab"></div>
<div style="left:1347px;top:7px;width:7px;height:4px;background:#6e6e6e;clip-path:polygon(50% 0,100% 100%,0 100%)"></div>
<div style="left:1343px;top:17px;width:15px;height:141px;background:#fff;border:1px solid #ababab"></div>
<div style="left:1343px;top:603px;width:15px;height:15px;background:#fff;border:1px solid #c8c8c8"></div>
<div style="left:1347px;top:609px;width:7px;height:4px;background:#6e6e6e;clip-path:polygon(0 0,100% 0,50% 100%)"></div>
<div style="left:833px;top:624px;width:507px;height:15px;background:#dadada"></div>
<div style="left:833px;top:624px;width:15px;height:15px;background:#fff;border:1px solid #ababab"></div>
<div style="left:838px;top:628px;width:4px;height:7px;background:#6e6e6e;clip-path:polygon(100% 0,100% 100%,0 50%)"></div>
<div style="left:847px;top:624px;width:166px;height:15px;background:#fff;border:1px solid #ababab"></div>
<div style="left:1325px;top:624px;width:15px;height:15px;background:#fff;border:1px solid #c8c8c8"></div>
<div style="left:1331px;top:628px;width:4px;height:7px;background:#6e6e6e;clip-path:polygon(0 0,100% 50%,0 100%)"></div>
<div style="left:816px;top:627px;width:2px;height:2px;background:#b8b8b8"></div>
<div style="left:816px;top:631px;width:2px;height:2px;background:#b8b8b8"></div>
<div style="left:816px;top:635px;width:2px;height:2px;background:#b8b8b8"></div>
<div style="left:100px;top:617px;width:69px;height:25px;background:#fff;border-left:1px solid #a6a6a6;border-right:1px solid #a6a6a6;border-bottom:2px solid #217346"></div>
<div style="left:100px;top:618px;width:69px;height:22px;line-height:22px;text-align:center;font-size:14px;color:#217346;letter-spacing:-0.5px">Sheet1</div>
<div style="left:27px;top:626px;width:4px;height:9px;background:#c6c6c6;clip-path:polygon(100% 0,100% 100%,0 50%)"></div>
<div style="left:56px;top:626px;width:4px;height:9px;background:#c6c6c6;clip-path:polygon(0 0,100% 50%,0 100%)"></div>
<div style="left:202px;top:623px;width:16px;height:16px;border:1px solid #7a7a7a;border-radius:50%"></div>
<div style="left:206px;top:630px;width:8px;height:2px;background:#7a7a7a"></div>
<div style="left:209px;top:627px;width:2px;height:8px;background:#7a7a7a"></div>
</div></body></html>
